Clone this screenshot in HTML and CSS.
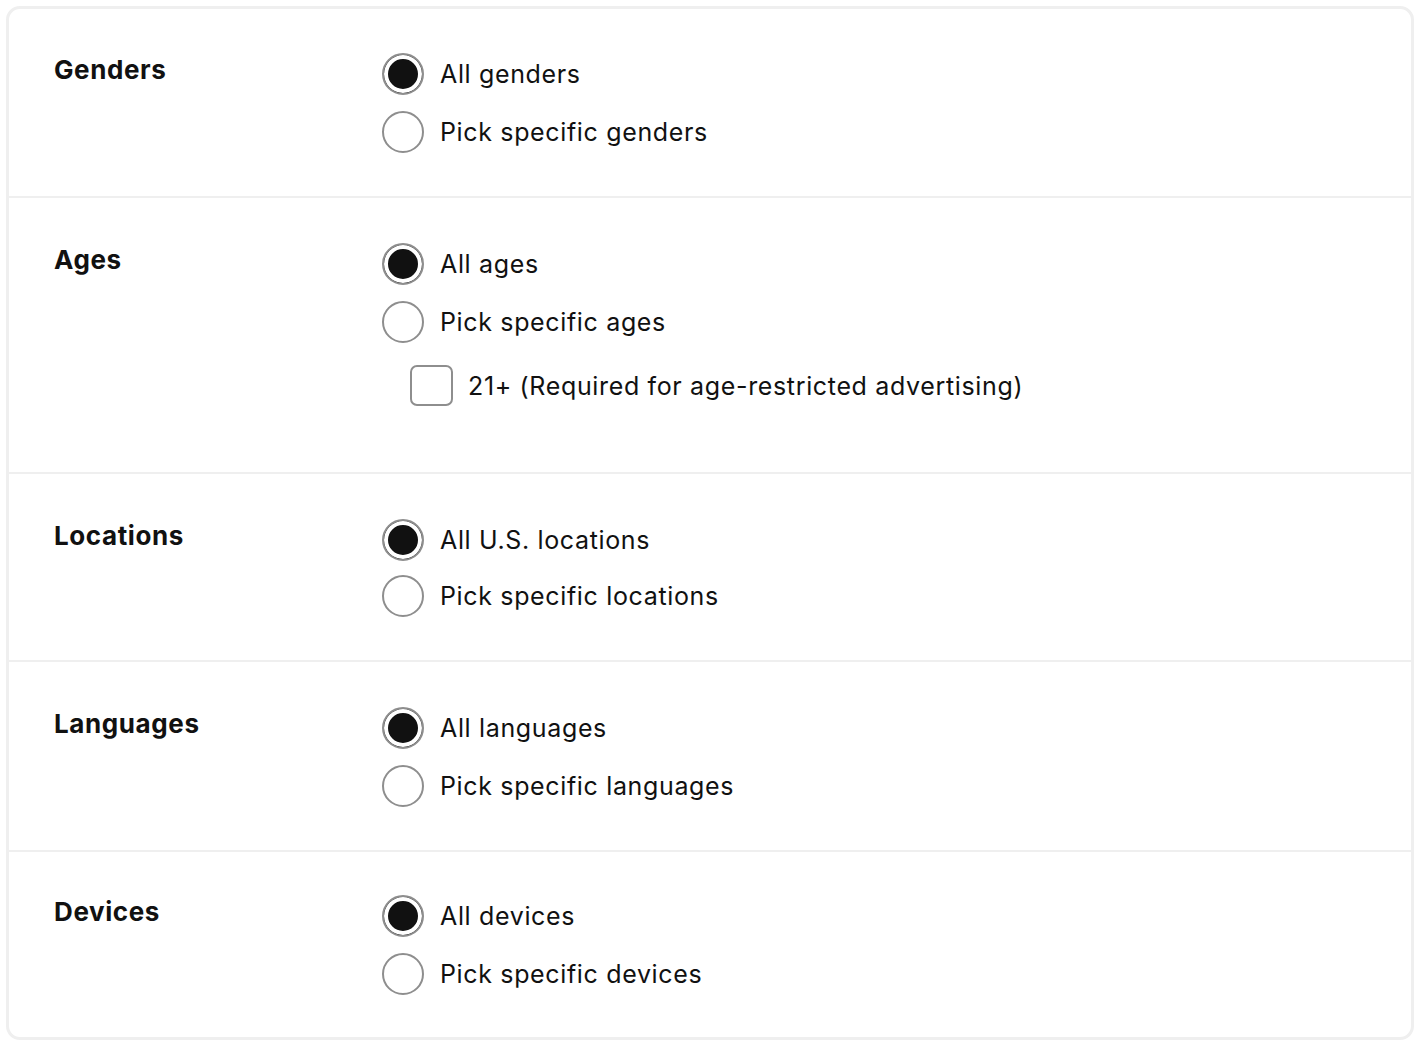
FILE: index.html
```html
<!DOCTYPE html>
<html lang="en">
<head>
<meta charset="utf-8">
<title>Audience targeting</title>
<link rel="stylesheet" href="styles.css">
</head>
<body>
<div class="card">
  <section class="row first">
    <h3 class="label">Genders</h3>
    <div class="options">
      <label class="opt"><span class="radio checked"></span><span class="txt">All genders</span></label>
      <label class="opt"><span class="radio"></span><span class="txt">Pick specific genders</span></label>
    </div>
  </section>
  <section class="row">
    <h3 class="label">Ages</h3>
    <div class="options">
      <label class="opt"><span class="radio checked"></span><span class="txt">All ages</span></label>
      <label class="opt"><span class="radio"></span><span class="txt">Pick specific ages</span></label>
      <label class="opt sub"><span class="check"></span><span class="txt">21+ (Required for age-restricted advertising)</span></label>
    </div>
  </section>
  <section class="row tight">
    <h3 class="label">Locations</h3>
    <div class="options">
      <label class="opt"><span class="radio checked"></span><span class="txt">All U.S. locations</span></label>
      <label class="opt"><span class="radio"></span><span class="txt">Pick specific locations</span></label>
    </div>
  </section>
  <section class="row">
    <h3 class="label">Languages</h3>
    <div class="options">
      <label class="opt"><span class="radio checked"></span><span class="txt">All languages</span></label>
      <label class="opt"><span class="radio"></span><span class="txt">Pick specific languages</span></label>
    </div>
  </section>
  <section class="row last">
    <h3 class="label">Devices</h3>
    <div class="options">
      <label class="opt"><span class="radio checked"></span><span class="txt">All devices</span></label>
      <label class="opt"><span class="radio"></span><span class="txt">Pick specific devices</span></label>
    </div>
  </section>
</div>
</body>
</html>
```
FILE: styles.css
```css
* { box-sizing: border-box; }
html, body { margin: 0; background: #ffffff; }
body {
  padding: 6px 8px 8px 6px;
  font-family: Inter, "Noto Sans", "Liberation Sans", sans-serif;
  color: #111111;
}
.card {
  width: 1408px;
  height: 1034px;
  border: 3px solid #efefef;
  border-radius: 14px;
  overflow: hidden;
}
.row {
  display: flex;
  align-items: flex-start;
  padding: 45px 45px 43px 45px;
}
.row + .row { border-top: 2px solid #efefef; }
.row.first { padding-top: 44px; }
.row.tight .options { gap: 14px; }
.row.last { padding-top: 43px; }
.label {
  margin: 0;
  padding-top: 2px;
  width: 328px;
  font-size: 26px;
  line-height: 30px;
  font-weight: 700;
  letter-spacing: 0.6px;
}
.options {
  display: flex;
  flex-direction: column;
  gap: 16px;
}
.opt {
  display: flex;
  align-items: center;
  gap: 16px;
  height: 42px;
  font-size: 25px;
  line-height: 32px;
  letter-spacing: 0.65px;
}
.opt.sub {
  margin: 6px 0 23px 28px;
  height: 41px;
  gap: 15px;
}
.radio {
  flex: none;
  width: 42px;
  height: 42px;
  border: 2px solid #8e8e8e;
  border-radius: 50%;
  background: #ffffff;
}
.radio.checked {
  background: #111111;
  box-shadow: inset 0 0 0 4px #ffffff;
}
.check {
  flex: none;
  width: 43px;
  height: 41px;
  border: 2px solid #8e8e8e;
  border-radius: 7px;
  background: #ffffff;
}
.txt { white-space: nowrap; }
```
